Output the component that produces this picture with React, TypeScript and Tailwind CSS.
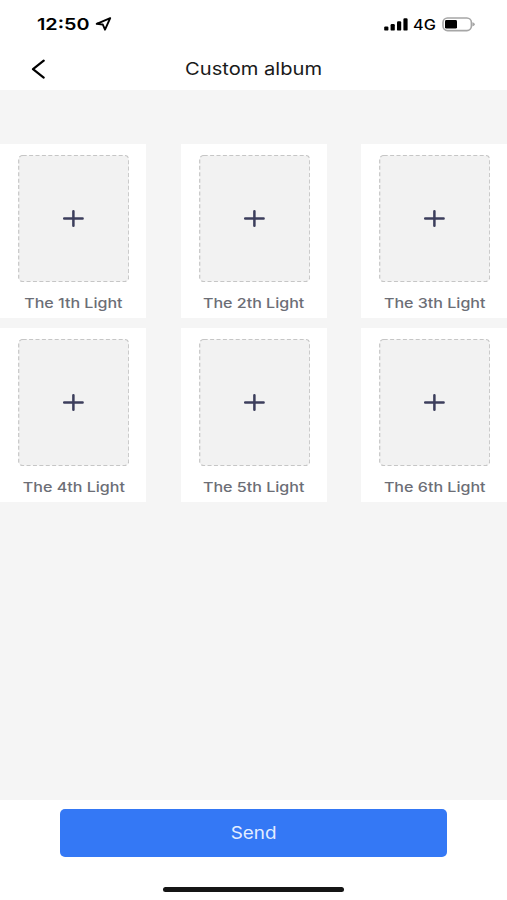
const lights = [1, 2, 3, 4, 5, 6];

function StatusBar() {
  return (
    <div className="flex h-12 items-center justify-between pr-8 pl-[37px] text-black">
      <div className="flex items-center">
        <span className="w-[58px] text-[16.5px] leading-none font-semibold">
          <span className="inline-block origin-left scale-x-[1.2]">12:50</span>
        </span>
        <svg width="17" height="14" viewBox="0 0 17 14" fill="none">
          <path
            d="M15.2 1.1 1.7 6.8 7.8 7.5 10 12.7Z"
            stroke="currentColor"
            strokeWidth="1.9"
            strokeLinejoin="round"
          />
        </svg>
      </div>

      <div className="flex items-center">
        <svg width="24" height="13" viewBox="0 0 24 13" fill="currentColor">
          <rect x="0.2" y="8.4" width="4.2" height="4.2" rx="1.2" />
          <rect x="6.6" y="6.1" width="4.2" height="6.5" rx="1.2" />
          <rect x="13" y="3.2" width="4.2" height="9.4" rx="1.2" />
          <rect x="19.4" y="0.3" width="4.2" height="12.3" rx="1.2" />
        </svg>
        <span className="ml-[5px] w-[29px] pt-px text-[14px] leading-none font-medium">
          <span className="inline-block origin-left scale-x-[1.16]">4G</span>
        </span>
        <svg width="33" height="15" viewBox="0 0 33 15" fill="none">
          <rect x="1" y="1" width="28.4" height="12.6" rx="4.5" stroke="#a6a6a6" strokeWidth="1.6" />
          <rect x="3" y="3" width="12" height="8.6" rx="1.4" fill="black" />
          <path d="M30.4 5.2Q32.8 5.8 32.8 7.3Q32.8 8.8 30.4 9.4Z" fill="#a6a6a6" />
        </svg>
      </div>
    </div>
  );
}

function LightCard({ index }: { index: number }) {
  return (
    <div className="flex h-[174px] w-[146px] flex-col items-center bg-white pt-[11px] pl-px">
      <button className="flex h-[127px] w-[111px] items-center justify-center">
        <svg width="111" height="127" viewBox="0 0 111 127" fill="none">
          <rect
            x="0.7"
            y="0.5"
            width="110"
            height="126"
            rx="4"
            fill="#f2f2f2"
            stroke="#c6c6c6"
            strokeWidth="1.2"
            strokeDasharray="4 2.4"
          />
          <path d="M46.2 63.5H64.6M55.4 56.2V70.8" stroke="#3c3e5c" strokeWidth="2.5" strokeLinecap="round" />
        </svg>
      </button>
      <p className="mt-[11px] text-[13.5px] leading-5 font-medium whitespace-nowrap text-[#6c6e76]">
        <span className="inline-block scale-x-[1.19]">The {index}th Light</span>
      </p>
    </div>
  );
}

export default function App() {
  return (
    <div className="flex h-[900px] w-[507px] flex-col overflow-hidden bg-[#f5f5f5] font-['Inter',sans-serif]">
      <header className="h-[90px] bg-white">
        <StatusBar />
        <div className="grid h-[42px] grid-cols-[100px_1fr_100px] items-center">
          <button className="pl-[31px] text-black">
            <svg width="15" height="20" viewBox="0 0 15 20" fill="none">
              <path
                d="M12.7 1.7 2 10.2 12.7 18.6"
                stroke="currentColor"
                strokeWidth="2.2"
                strokeLinecap="round"
                strokeLinejoin="round"
              />
            </svg>
          </button>
          <h1 className="text-center text-[17.5px] text-[#1a1a1a]">
            <span className="inline-block scale-x-[1.15]">Custom album</span>
          </h1>
        </div>
      </header>

      <main className="flex-1 pt-[54px]">
        <div className="grid grid-cols-[repeat(3,146px)] justify-between gap-y-[10px]">
          {lights.map((index) => (
            <LightCard key={index} index={index} />
          ))}
        </div>
      </main>

      <footer className="flex h-[100px] flex-col items-center bg-white pt-[9px]">
        <button className="h-12 w-[387px] rounded-[5px] bg-[#3478f5] pt-[2px] text-[17px] text-[#e3edff]">
          <span className="inline-block scale-x-[1.11]">Send</span>
        </button>
        <div className="mt-[30px] h-[5px] w-[181px] rounded-full bg-[#151515]" />
      </footer>
    </div>
  );
}
